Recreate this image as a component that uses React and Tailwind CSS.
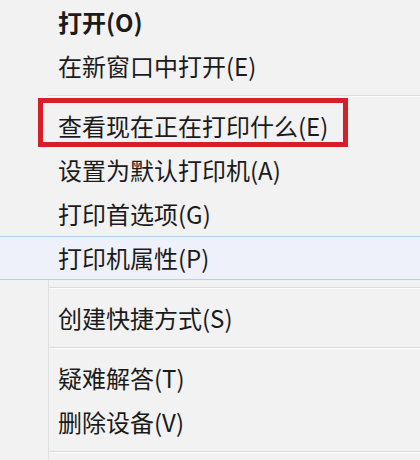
import React from "react";

const font = { fontFamily: '"Noto Sans CJK SC", "Noto Sans", sans-serif' };

function Row({ children, bold }) {
  return (
    <div className={"h-[44px] flex items-center pl-[58px] text-[24px] leading-none text-[#1b1b1b] " + (bold ? "font-bold" : "font-normal")}>
      {children}
    </div>
  );
}

function Sep() {
  return (
    <div className="h-[16px] flex flex-col justify-center pl-[48px]">
      <div className="h-px bg-[#dcdcdc]" />
      <div className="h-px bg-[#fbfbfb]" />
    </div>
  );
}

export default function App() {
  return (
    <div className="w-[420px] h-[460px] overflow-hidden bg-[#f2f2f2]" style={font}>
      <Row bold>打开(O)</Row>
      <Row>在新窗口中打开(E)</Row>
      <Sep />
      <div className="relative">
        <Row>查看现在正在打印什么(E)</Row>
        <div className="absolute left-[38px] top-[-6px] w-[310px] h-[49px] border-[5px] border-[#d61f28]" />
      </div>
      <Row>设置为默认打印机(A)</Row>
      <Row>打印首选项(G)</Row>
      <div className="h-[44px] flex items-center pl-[58px] text-[24px] leading-none text-[#1b1b1b] bg-[#eef1f9] border-y border-[#b7cfe7]">
        打印机属性(P)
      </div>
      <div className="relative">
        <div className="absolute left-[48px] top-0 bottom-0 w-px bg-[#e0e0e0]" />
        <Sep />
        <Row>创建快捷方式(S)</Row>
        <Sep />
        <Row>疑难解答(T)</Row>
        <Row>删除设备(V)</Row>
        <Sep />
      </div>
    </div>
  );
}
